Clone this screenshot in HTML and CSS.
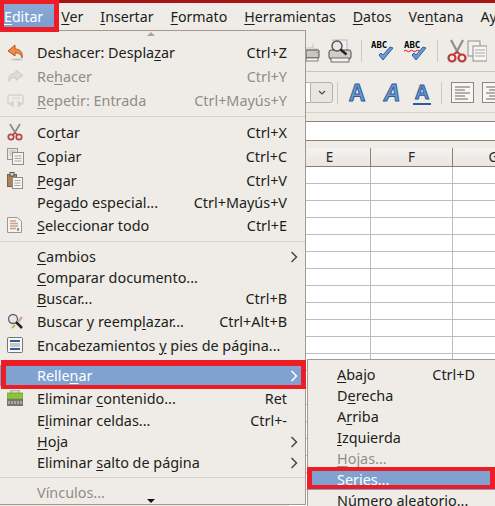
FILE: index.html
```html
<!DOCTYPE html>
<html lang="es">
<head>
    <meta charset="UTF-8">
    <title>Editar - Rellenar - Series</title>
    <link rel="stylesheet" href="styles.css">
</head>
<body>
<div class="app">
  <nav class="menubar">
    <span class="top active"><u>E</u>ditar</span>
    <span class="top"><u>V</u>er</span>
    <span class="top"><u>I</u>nsertar</span>
    <span class="top"><u>F</u>ormato</span>
    <span class="top"><u>H</u>erramientas</span>
    <span class="top"><u>D</u>atos</span>
    <span class="top">Ve<u>n</u>tana</span>
    <span class="top">Ay</span>
  </nav>

  <div class="toolbar tb1">
    <svg class="t-print" width="14" height="22" viewBox="0 0 14 22"><path d="M0 7h5l3-5v6h4l1 2v9H0z" fill="#d8d6d2"/><rect x="0" y="10" width="13" height="8" rx="1" fill="#c9c7c3" stroke="#55534f"/><rect x="0" y="18" width="12" height="3" fill="#f4f3f1" stroke="#55534f" stroke-width=".7"/><rect x="10" y="12" width="2" height="1" fill="#7fbf4f"/></svg>
    <svg width="24" height="24" viewBox="0 0 24 24"><rect x="5" y="1" width="14" height="12" fill="#f2f1ef" stroke="#b9b7b3"/><rect x="1" y="11" width="22" height="9" rx="2" fill="#cfcdc9" stroke="#4f4d4a"/><rect x="3" y="19" width="18" height="4" fill="#f4f3f1" stroke="#4f4d4a" stroke-width=".8"/><circle cx="9" cy="7" r="5" fill="#e4e8ec" stroke="#55534f" stroke-width="1.4"/><path d="M12.500 10.500l6 5" stroke="#222" stroke-width="2.400"/></svg>
    <i class="tb-sep"></i>
    <svg class="abc" width="24" height="24" viewBox="0 0 24 24"><text x="0" y="9" class="abc-text">ABC</text><path d="M8 16l4 5 10-12-3-1-7 8-2-2z" fill="#6d9bd0" stroke="#2f5f9e"/></svg>
    <svg class="abc" width="24" height="24" viewBox="0 0 24 24"><text x="0" y="9" class="abc-text">ABC</text><path d="M0 12q1.500-1.500 3 0t3 0 3 0 3 0 3 0 3 0" fill="none" stroke="#d11" stroke-width="1"/><path d="M8 16l4 5 10-12-3-1-7 8-2-2z" fill="#6d9bd0" stroke="#2f5f9e"/></svg>
    <i class="tb-sep"></i>
    <svg width="20" height="24" viewBox="0 0 20 24"><path d="M4 1l7 13M16 1L9 14" stroke="#8f8d8a" stroke-width="2.200"/><circle cx="5" cy="19" r="3.500" fill="none" stroke="#c0393b" stroke-width="2.200"/><circle cx="15" cy="19" r="3.500" fill="none" stroke="#c0393b" stroke-width="2.200"/><path d="M6 16l4-3 4 3" fill="none" stroke="#c0393b" stroke-width="2"/></svg>
    <svg width="20" height="22" viewBox="0 0 20 22"><rect x="1" y="1" width="12" height="15" fill="#f2f1ef" stroke="#8f8d8a"/><rect x="6" y="6" width="14" height="15" fill="#f7f6f4" stroke="#8f8d8a"/><path d="M8 10h10M8 13h10M8 16h10" stroke="#aaa8a4"/></svg>
  </div>

  <div class="toolbar tb2">
    <div class="combo"><span class="combo-field"></span><span class="combo-btn"><svg width="8" height="5" viewBox="0 0 8 5"><path d="M1 1l3 3 3-3" fill="none" stroke="#4a4845" stroke-width="1.200"/></svg></span></div>
    <i class="tb-sep"></i>
    <span class="fmt bold">A</span>
    <span class="fmt ital">A</span>
    <span class="fmt under">A</span>
    <i class="tb-sep"></i>
    <svg class="align" width="23" height="21" viewBox="0 0 23 21"><rect x=".5" y=".5" width="22" height="20" fill="#f7f6f4" stroke="#8a8885"/><path d="M4 5h15M4 8h10M4 11h15M4 14h10M4 17h13" stroke="#6a6865"/></svg>
    <svg class="align" width="23" height="21" viewBox="0 0 23 21"><rect x=".5" y=".5" width="22" height="20" fill="#f7f6f4" stroke="#8a8885"/><path d="M4 5h15M7 8h9M4 11h15M7 14h9M4 17h15" stroke="#6a6865"/></svg>
  </div>

  <div class="formula"></div>

  <div class="sheet">
    <div class="col-heads">
      <span class="col">E</span>
      <span class="col">F</span>
      <span class="col">G</span>
    </div>
    <div class="cells"></div>
  </div>

  <div class="menu">
    <div class="scroll-up"></div>
    <div class="item">
      <span class="ico"><svg width="17" height="17" viewBox="0 0 17 17"><ellipse cx="10" cy="15.500" rx="6" ry="1.200" fill="#c9c6c1"/><path d="M8 1L1 7l7 5V9c4 0 6 1 7 5 1-6-2-9-7-9z" fill="#ee8a4a" stroke="#b9551f"/></svg></span>
      <span class="label">Deshacer: Despla<u>z</u>ar</span><span class="key">Ctrl+Z</span>
    </div>
    <div class="item off">
      <span class="ico"><svg width="17" height="17" viewBox="0 0 17 17"><path d="M9 2l7 5.500-7 5V9.500c-4 0-6 1-7 4-1-6 2-8.500 7-8.500z" fill="#dcdad6" stroke="#cfccc8"/></svg></span>
      <span class="label">Re<u>h</u>acer</span><span class="key">Ctrl+Y</span>
    </div>
    <div class="item off">
      <span class="ico"><svg width="17" height="17" viewBox="0 0 17 17"><path d="M7 12H3q-2 0-2-2V5q0-2 2-2h11q2 0 2 2v5q0 2-2 2h-2" fill="none" stroke="#d4d2ce" stroke-width="1.500"/><path d="M5 6h8M6 15l-3-3 3-3zM11 9v6l4-3z" fill="#d4d2ce" stroke="#d4d2ce"/></svg></span>
      <span class="label"><u>R</u>epetir: Entrada</span><span class="key">Ctrl+Mayús+Y</span>
    </div>
    <div class="sep"></div>
    <div class="item">
      <span class="ico"><svg width="16" height="18" viewBox="0 0 16 18"><path d="M3 1l6 10M13 1L7 11" stroke="#8f8d8a" stroke-width="1.800"/><circle cx="4" cy="14" r="2.700" fill="none" stroke="#b8464a" stroke-width="1.800"/><circle cx="12" cy="14" r="2.700" fill="none" stroke="#b8464a" stroke-width="1.800"/><path d="M5 12l3-2 3 2" fill="none" stroke="#b8464a" stroke-width="1.500"/></svg></span>
      <span class="label">Co<u>r</u>tar</span><span class="key">Ctrl+X</span>
    </div>
    <div class="item">
      <span class="ico"><svg width="17" height="17" viewBox="0 0 17 17"><rect x=".5" y=".5" width="10" height="11" fill="#e9e7e3" stroke="#9a9894"/><rect x="5.500" y="4.500" width="11" height="12" fill="#f4f3f1" stroke="#8f8d8a"/><path d="M7.500 8h7M7.500 10.500h7M7.500 13h7" stroke="#a8a6a2"/><path d="M2.500 3h6M2.500 5h2M2.500 7h2" stroke="#b5b3af"/></svg></span>
      <span class="label"><u>C</u>opiar</span><span class="key">Ctrl+C</span>
    </div>
    <div class="item">
      <span class="ico"><svg width="16" height="17" viewBox="0 0 16 17"><rect x=".5" y="2.500" width="9" height="12" fill="#a9855c" stroke="#7d6343"/><rect x="3" y=".5" width="4" height="3.500" fill="#d8d6d2" stroke="#55534f"/><rect x="5.500" y="5.500" width="10" height="11" fill="#f6f5f3" stroke="#8f8d8a"/><path d="M7.500 8.500h6M7.500 11h6M7.500 13.500h6" stroke="#a8a6a2"/></svg></span>
      <span class="label"><u>P</u>egar</span><span class="key">Ctrl+V</span>
    </div>
    <div class="item short">
      <span class="ico"></span>
      <span class="label">Pega<u>d</u>o especial...</span><span class="key">Ctrl+Mayús+V</span>
    </div>
    <div class="item">
      <span class="ico"><svg width="15" height="16" viewBox="0 0 15 16"><path d="M.5.500h10l4 4v11H.5z" fill="#f4f3f1" stroke="#9a9894"/><path d="M3 4h6M3 6.500h8M3 9h8M3 11.500h6" stroke="#c9a48f" stroke-width="1.400"/><path d="M11 11v3" stroke="#333"/></svg></span>
      <span class="label"><u>S</u>eleccionar todo</span><span class="key">Ctrl+E</span>
    </div>
    <div class="sep sep-tall"></div>
    <div class="item short">
      <span class="ico"></span>
      <span class="label"><u>C</u>ambios</span>
      <svg class="arrow" width="8" height="12" viewBox="0 0 8 12"><path d="M1.500 1l5 5-5 5" fill="none" stroke="#4a4845" stroke-width="1.500"/></svg>
    </div>
    <div class="item short">
      <span class="ico"></span>
      <span class="label"><u>C</u>omparar documento...</span>
    </div>
    <div class="item short">
      <span class="ico"></span>
      <span class="label"><u>B</u>uscar...</span><span class="key">Ctrl+B</span>
    </div>
    <div class="item">
      <span class="ico"><svg width="17" height="17" viewBox="0 0 17 17"><circle cx="6" cy="6" r="4.500" fill="#e4e8ec" stroke="#66645f" stroke-width="1.300"/><path d="M9 9l6 6" stroke="#222" stroke-width="2.500"/><path d="M11 9l4-5" stroke="#d89ac0" stroke-width="2.500"/><path d="M5 15l3-3" stroke="#c8b23c" stroke-width="2"/></svg></span>
      <span class="label">Buscar y reemp<u>l</u>azar...</span><span class="key">Ctrl+Alt+B</span>
    </div>
    <div class="item">
      <span class="ico"><svg width="16" height="16" viewBox="0 0 16 16"><rect x=".5" y=".5" width="15" height="15" rx="1" fill="#f7f6f4" stroke="#77756f"/><rect x="3" y="3" width="10" height="2" fill="#2f5aa0"/><rect x="3" y="6" width="10" height="4" fill="#c9c7c3"/><rect x="3" y="11" width="10" height="2" fill="#2f5aa0"/></svg></span>
      <span class="label">Encabezamientos <u>y</u> pies de página...</span>
    </div>
    <div class="item short on framed">
      <span class="ico"></span>
      <span class="label">Relle<u>n</u>ar</span>
      <svg class="arrow" width="8" height="12" viewBox="0 0 8 12"><path d="M1.500 1l5 5-5 5" fill="none" stroke="#fff" stroke-width="1.500"/></svg>
    </div>
    <div class="item">
      <span class="ico"><svg width="16" height="16" viewBox="0 0 16 16"><rect x="4" y="0" width="8" height="4" fill="#dcdad6" stroke="#77756f" stroke-width=".7"/><rect x="0" y="3" width="16" height="6" fill="#8ac43f" stroke="#5f9a22" stroke-width=".7"/><rect x="0" y="9" width="16" height="7" fill="#77756f"/><path d="M2 11v3M5 11v3M8 11v3M11 11v3M14 11v3" stroke="#dcdad6"/></svg></span>
      <span class="label">Eliminar <u>c</u>ontenido...</span><span class="key">Ret</span>
    </div>
    <div class="item short">
      <span class="ico"></span>
      <span class="label">E<u>l</u>iminar celdas...</span><span class="key">Ctrl+-</span>
    </div>
    <div class="item short">
      <span class="ico"></span>
      <span class="label"><u>H</u>oja</span>
      <svg class="arrow" width="8" height="12" viewBox="0 0 8 12"><path d="M1.500 1l5 5-5 5" fill="none" stroke="#4a4845" stroke-width="1.500"/></svg>
    </div>
    <div class="item short">
      <span class="ico"></span>
      <span class="label">Eliminar <u>s</u>alto de página</span>
      <svg class="arrow" width="8" height="12" viewBox="0 0 8 12"><path d="M1.500 1l5 5-5 5" fill="none" stroke="#4a4845" stroke-width="1.500"/></svg>
    </div>
    <div class="sep"></div>
    <div class="item short off">
      <span class="ico"></span>
      <span class="label">Vínculos...</span>
    </div>
    <div class="scroll-down"></div>
  </div>

  <div class="submenu">
    <div class="item short"><span class="label"><u>A</u>bajo</span><span class="key">Ctrl+D</span></div>
    <div class="item short"><span class="label">D<u>e</u>recha</span></div>
    <div class="item short"><span class="label">A<u>r</u>riba</span></div>
    <div class="item short"><span class="label"><u>I</u>zquierda</span></div>
    <div class="item short off"><span class="label"><u>H</u>ojas...</span></div>
    <div class="item short on framed"><span class="label">Series...</span></div>
    <div class="item short"><span class="label">Número aleatorio...</span></div>
  </div>
</div>
</body>
</html>
```

FILE: styles.css
```css
html, body {
  margin: 0;
  height: 100%;
  overflow: hidden;
}
body {
  font-family: "Noto Sans", "Open Sans", sans-serif;
  font-size: 14.4px;
  color: #211d1a;
  background: #efece7;
}
u {
  text-decoration-thickness: 1px;
  text-underline-offset: 2px;
}

.app {
  position: relative;
  width: 495px;
  height: 506px;
  overflow: hidden;
}

/* menu bar */
.menubar {
  display: flex;
  gap: 17px;
  height: 27px;
  align-items: center;
  padding-left: 4px;
  border-top: 3px solid #a51513;
  font-size: 14.2px;
  white-space: nowrap;
}
.top.active {
  position: relative;
  z-index: 5;
  color: #fff;
  margin-right: 1px;
}
.top.active::after {
  content: "";
  position: absolute;
  z-index: -1;
  top: -8px;
  bottom: -6px;
  left: -4px;
  right: -16px;
  border: solid #ee1c25;
  border-width: 5px 5px 5px 4px;
  background: linear-gradient(#8aa9d4, #7b9fd0) padding-box;
}

/* toolbars, only the part right of the open menu shows */
.toolbar {
  display: flex;
  align-items: center;
  box-sizing: border-box;
  padding-left: 306px;
  border-bottom: 1px solid #c9c5be;
  white-space: nowrap;
}
.tb1 {
  height: 42px;
}
.tb1 svg { flex: none; }
.tb1 .t-print { margin-right: 8px; }
.tb1 .tb-sep { margin: 0 9px 0 9px; }
.tb1 .abc { margin-right: 9px; }
.tb1 .abc + .tb-sep { margin-left: 0; }
.tb-sep {
  flex: none;
  width: 1px;
  height: 22px;
  background: #cdc9c3;
}
.abc-text {
  font-family: "DejaVu Sans Mono", monospace;
  font-size: 9px;
  font-weight: 700;
  fill: #000;
}
.tb2 {
  height: 50px;
  padding-bottom: 8px;
  border-bottom: 1px solid #8c8274;
  background: linear-gradient(#d5d1cb, #d5d1cb) 0 40px / 100% 1px no-repeat;
}
.combo {
  display: flex;
  height: 21px;
  flex: none;
}
.combo-field {
  width: 4px;
  background: #fff;
  border: solid #b5b1aa;
  border-width: 1px 0;
}
.combo-btn {
  display: flex;
  width: 21px;
  align-items: center;
  justify-content: center;
  border: 1px solid #b5b1aa;
  border-radius: 0 3px 3px 0;
  background: #e9e6e1;
}
.tb2 .combo + .tb-sep { margin: 0 8px 0 4px; }
.fmt {
  flex: none;
  width: 22px;
  text-align: center;
  font-family: "Liberation Sans", sans-serif;
  font-size: 23px;
  font-weight: 700;
  line-height: 26px;
  color: #6d9bd0;
  -webkit-text-stroke: 1px #2c5c9c;
  margin-right: 13px;
}
.fmt.ital { font-style: italic; margin-right: 10px; }
.fmt.under {
  margin-right: 10px;
  border-bottom: 2px solid #2c5c9c;
  width: 18px;
  line-height: 22px;
  font-size: 20px;
}
.tb2 .fmt + .tb-sep { margin: 0 9px 0 0; }
.align { flex: none; margin-right: 8px; }

.formula {
  height: 18px;
  margin-left: 306px;
  background: #fff;
  border-bottom: 1px solid #8c8274;
}

/* sheet */
.sheet {
  margin-left: 289px;
  padding-top: 7px;
}
.col-heads {
  display: flex;
  height: 18px;
  width: 260px;
  background: linear-gradient(#f4f2ef, #e9e6e1);
  border-bottom: 1px solid #8c8274;
  color: #2b2724;
  font-size: 13.5px;
}
.col {
  flex: none;
  box-sizing: border-box;
  width: 82px;
  text-align: center;
  line-height: 18px;
  border-right: 1px solid #8c8274;
}
.cells {
  height: 340px;
  background-color: #fff;
  background-image:
    repeating-linear-gradient(to bottom, transparent 0 16px, #bdbdbd 16px 17px),
    repeating-linear-gradient(to right, transparent 0 81px, #bdbdbd 81px 82px);
}

/* menus */
.menu, .submenu {
  position: absolute;
  box-sizing: border-box;
  background: #efece7;
  border: 1px solid #a29a8e;
}
.menu {
  z-index: 2;
  top: 30px;
  left: -1px;
  width: 307px;
  height: 475px;
}
.submenu {
  z-index: 3;
  top: 359px;
  left: 307px;
  width: 190px;
  height: 160px;
  padding-top: 4px;
}
.scroll-up {
  width: 0;
  height: 0;
  margin: 1px 0 4px 147px;
  border: 4px solid transparent;
  border-top: 0;
  border-bottom: 4px solid #a8a49e;
}
.scroll-down {
  position: absolute;
  left: 147px;
  bottom: 1px;
  border: 4px solid transparent;
  border-bottom: 0;
  border-top: 4px solid #111;
}
.item {
  position: relative;
  display: flex;
  align-items: center;
  height: 24px;
  padding: 0 18px 0 7px;
  white-space: nowrap;
}
.item.short { height: 21px; }
.ico {
  display: flex;
  flex: none;
  width: 30px;
  align-items: center;
}
.key { margin-left: auto; }
.arrow {
  margin-left: auto;
  margin-right: -11px;
}
.off { color: #908c86; }
.on {
  background: #7fa2d1;
  color: #fff;
}
.sep {
  height: 8px;
  background: linear-gradient(#d5d1cb, #d5d1cb) center / 100% 1px no-repeat;
}
.sep-tall { height: 9px; }
.sep + .item.short.off { margin-top: 1px; }

.menu .framed { margin-top: 8px; }
.menu .framed::after, .submenu .framed::after {
  content: "";
  position: absolute;
  box-sizing: border-box;
  border: solid #ee1c25;
}
.menu .framed::after {
  top: -5px;
  bottom: -3px;
  left: 1px;
  right: -1px;
  border-width: 6px 5px 4px;
}
.submenu .framed::after {
  top: -2px;
  bottom: 1px;
  left: -1px;
  right: 1px;
  border-width: 4px 5px;
}
.submenu .item { padding: 0 21px 0 29px; }
```
